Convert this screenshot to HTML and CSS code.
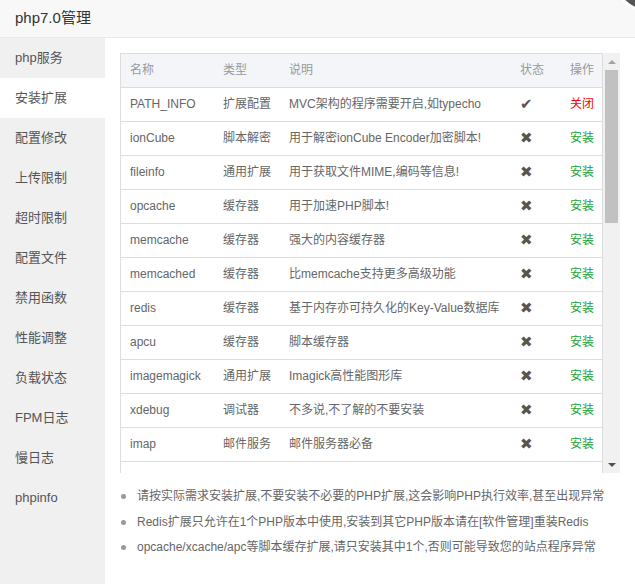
FILE: index.html
```html
<!DOCTYPE html>
<html lang="zh-CN">
<head>
<meta charset="utf-8">
<title>php7.0管理</title>
<link rel="stylesheet" href="styles.css">
</head>
<body>
<div class="dialog">
  <div class="head">php7.0管理</div>
  <span class="close"></span>
  <div class="main">
    <ul class="side">
      <li>php服务</li>
      <li class="on">安装扩展</li>
      <li>配置修改</li>
      <li>上传限制</li>
      <li>超时限制</li>
      <li>配置文件</li>
      <li>禁用函数</li>
      <li>性能调整</li>
      <li>负载状态</li>
      <li>FPM日志</li>
      <li>慢日志</li>
      <li>phpinfo</li>
    </ul>
    <div class="content">
      <div class="grid">
        <div class="tbox">
          <table>
            <colgroup>
              <col class="c-name"><col class="c-type"><col class="c-desc"><col class="c-stat"><col class="c-op">
            </colgroup>
            <thead>
              <tr><th>名称</th><th>类型</th><th>说明</th><th>状态</th><th>操作</th></tr>
            </thead>
            <tbody>
              <tr><td>PATH_INFO</td><td>扩展配置</td><td>MVC架构的程序需要开启,如typecho</td><td class="st">✔</td><td class="off">关闭</td></tr>
              <tr><td>ionCube</td><td>脚本解密</td><td>用于解密ionCube Encoder加密脚本!</td><td class="st">✖</td><td class="ins">安装</td></tr>
              <tr><td>fileinfo</td><td>通用扩展</td><td>用于获取文件MIME,编码等信息!</td><td class="st">✖</td><td class="ins">安装</td></tr>
              <tr><td>opcache</td><td>缓存器</td><td>用于加速PHP脚本!</td><td class="st">✖</td><td class="ins">安装</td></tr>
              <tr><td>memcache</td><td>缓存器</td><td>强大的内容缓存器</td><td class="st">✖</td><td class="ins">安装</td></tr>
              <tr><td>memcached</td><td>缓存器</td><td>比memcache支持更多高级功能</td><td class="st">✖</td><td class="ins">安装</td></tr>
              <tr><td>redis</td><td>缓存器</td><td>基于内存亦可持久化的Key-Value数据库</td><td class="st">✖</td><td class="ins">安装</td></tr>
              <tr><td>apcu</td><td>缓存器</td><td>脚本缓存器</td><td class="st">✖</td><td class="ins">安装</td></tr>
              <tr><td>imagemagick</td><td>通用扩展</td><td>Imagick高性能图形库</td><td class="st">✖</td><td class="ins">安装</td></tr>
              <tr><td>xdebug</td><td>调试器</td><td>不多说,不了解的不要安装</td><td class="st">✖</td><td class="ins">安装</td></tr>
              <tr><td>imap</td><td>邮件服务</td><td>邮件服务器必备</td><td class="st">✖</td><td class="ins">安装</td></tr>
            </tbody>
          </table>
        </div>
        <div class="sbar">
          <div class="sb-btn"><span class="arr-up"></span></div>
          <div class="sb-thumb"></div>
          <div class="sb-track"></div>
          <div class="sb-btn"><span class="arr-down"></span></div>
        </div>
      </div>
      <ul class="notes">
        <li>请按实际需求安装扩展,不要安装不必要的PHP扩展,这会影响PHP执行效率,甚至出现异常</li>
        <li>Redis扩展只允许在1个PHP版本中使用,安装到其它PHP版本请在[软件管理]重装Redis</li>
        <li>opcache/xcache/apc等脚本缓存扩展,请只安装其中1个,否则可能导致您的站点程序异常</li>
      </ul>
    </div>
  </div>
</div>
</body>
</html>
```
FILE: styles.css
```css
html, body {
  margin: 0;
  padding: 0;
  background: #fff;
}
body {
  font-family: "Liberation Sans", "Noto Sans CJK SC", sans-serif;
  color: #555;
}
.dialog {
  position: relative;
  height: 584px;
  overflow: hidden;
  display: flex;
  flex-direction: column;
}
.head {
  height: 37px;
  line-height: 36px;
  padding-left: 15px;
  font-size: 15px;
  color: #333;
  background: #f8f8f8;
  border-bottom: 1px solid #eaeaea;
  flex: none;
}
.close {
  position: absolute;
  left: 617px;
  top: -41px;
  width: 52px;
  height: 52px;
  box-sizing: border-box;
  border-radius: 50%;
  background: #555;
  border: 3px solid #fff;
}
.main {
  flex: 1;
  display: flex;
  min-height: 0;
}
.side {
  width: 105px;
  flex: none;
  margin: 0;
  padding: 0;
  list-style: none;
  background: #f0f0f0;
}
.side li {
  height: 40px;
  line-height: 40px;
  padding-left: 15px;
  font-size: 13px;
  color: #555;
}
.side li.on {
  background: #fff;
}
.content {
  flex: 1;
  padding: 15px 15px 0;
  min-width: 0;
}
.grid {
  display: flex;
  height: 420px;
}
.tbox {
  flex: 1;
  box-sizing: border-box;
  border: 1px solid #ddd;
  border-bottom: none;
  overflow: hidden;
}
table {
  width: 100%;
  border-collapse: separate;
  border-spacing: 0;
  table-layout: fixed;
  font-size: 12px;
}
.c-name { width: 94px; }
.c-type { width: 66px; }
.c-desc { width: 231px; }
.c-stat { width: 50px; }
.c-op { width: 40px; }
th, td {
  padding: 0 0 0 8px;
  height: 33px;
  line-height: 33px;
  border-bottom: 1px solid #ddd;
  text-align: left;
  white-space: nowrap;
  overflow: hidden;
  font-weight: normal;
}
th:first-child, td:first-child {
  padding-left: 9px;
}
th {
  background: #f4f5f9;
  color: #999;
}
td {
  color: #666;
}
td.st {
  font-family: "DejaVu Sans", sans-serif;
  font-size: 15px;
  color: #555;
}
td.off {
  color: #f00;
}
td.ins {
  color: #20a53a;
}
.sbar {
  width: 17px;
  flex: none;
  background: #f1f1f1;
  display: flex;
  flex-direction: column;
}
.sb-btn {
  height: 17px;
  display: flex;
  align-items: center;
  justify-content: center;
}
.arr-up {
  width: 0;
  height: 0;
  border-left: 4px solid transparent;
  border-right: 4px solid transparent;
  border-bottom: 4px solid #a3a3a3;
}
.arr-down {
  width: 0;
  height: 0;
  border-left: 4px solid transparent;
  border-right: 4px solid transparent;
  border-top: 4px solid #505050;
}
.sb-thumb {
  height: 153px;
  margin: 0 2px;
  background: #c1c1c1;
}
.sb-track {
  flex: 1;
}
.notes {
  margin: 11px 0 0;
  padding: 0;
  list-style: none;
  font-size: 12px;
  line-height: 25.5px;
  color: #666;
}
.notes li {
  display: flex;
  align-items: center;
  white-space: nowrap;
}
.notes li::before {
  content: "";
  width: 5px;
  height: 5px;
  border-radius: 50%;
  background: #999;
  margin-left: 1px;
  margin-right: 11px;
  flex: none;
}
```
